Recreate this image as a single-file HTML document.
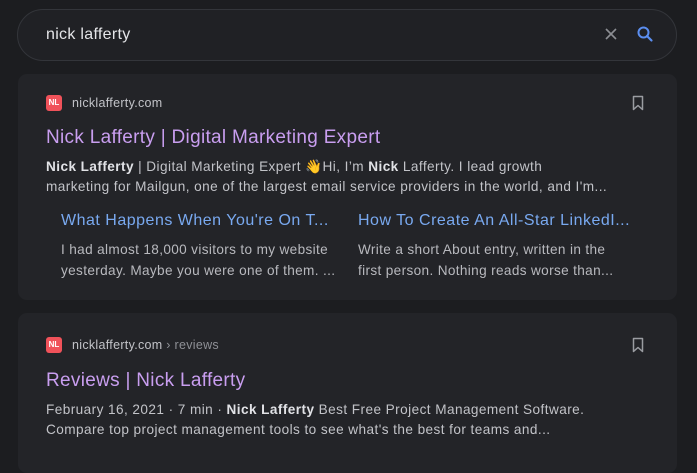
<!DOCTYPE html>
<html><head><meta charset="utf-8"><style>
*{margin:0;padding:0;box-sizing:border-box}
body{width:697px;height:452px;overflow:hidden;background:#1c1d20;font-family:"Liberation Sans",sans-serif;color:#c9cacf;position:relative}
.abs{position:absolute;white-space:nowrap}
.search{position:absolute;left:17px;top:9px;width:660px;height:52px;border:1px solid #33353a;border-radius:26px;background:#202125}
.card{position:absolute;left:18px;width:659px;background:#232428;border-radius:9px}
.fav{position:absolute;width:16px;height:16px;background:#f0525a;border-radius:3px;color:#fff;font-size:8px;line-height:16px;text-align:center;font-weight:bold}
.url{font-size:12.5px;color:#c2c3c8;letter-spacing:.3px}
.url span{color:#8e9096}
.title{font-size:19px;color:#c99ef0;letter-spacing:.3px}
.snip{font-size:13.6px;color:#c2c3c8;line-height:20px;letter-spacing:.43px}
.snip b{color:#e1e2e6}
.sub{font-size:16px;color:#79a9f0;letter-spacing:.5px}
.ss{font-size:13.6px;color:#b8b9be;line-height:21px;letter-spacing:.35px}
</style></head><body>
<div class="search"></div>
<div class="abs" style="left:46px;top:26px;font-size:16px;color:#e4e5e8;letter-spacing:.3px">nick lafferty</div>
<svg class="abs" style="left:604px;top:27px" width="14" height="14" viewBox="0 0 14 14"><path d="M2 2L12 12M12 2L2 12" stroke="#8c8e93" stroke-width="1.6"/></svg>
<svg class="abs" style="left:636px;top:25px" width="18" height="18" viewBox="0 0 18 18"><circle cx="7.5" cy="7.5" r="5" fill="none" stroke="#5b8ef0" stroke-width="2"/><path d="M11 11L15.5 15.5" stroke="#5b8ef0" stroke-width="2.2" stroke-linecap="round"/></svg>

<div class="card" style="top:74px;height:226px"></div>
<div class="fav" style="left:46px;top:95px">NL</div>
<div class="abs url" style="left:72px;top:96px">nicklafferty.com</div>
<svg class="abs" style="left:632px;top:95px" width="12" height="16" viewBox="0 0 12 16"><path d="M1.5 1.5H10.5V14.5L6 10.5L1.5 14.5Z" fill="none" stroke="#9a9ca1" stroke-width="1.5" stroke-linejoin="round"/></svg>
<div class="abs title" style="left:46px;top:127px">Nick Lafferty | Digital Marketing Expert</div>
<div class="abs snip" style="left:46px;top:157px"><b>Nick Lafferty</b> | Digital Marketing Expert <span style="color:#f0c030">👋</span>Hi, I’m <b>Nick</b> Lafferty. I lead growth<br>marketing for Mailgun, one of the largest email service providers in the world, and I'm...</div>
<div class="abs sub" style="left:61px;top:212px">What Happens When You're On T...</div>
<div class="abs sub" style="left:358px;top:212px">How To Create An All-Star LinkedI...</div>
<div class="abs ss" style="left:61px;top:239px">I had almost 18,000 visitors to my website<br>yesterday. Maybe you were one of them. ...</div>
<div class="abs ss" style="left:358px;top:239px">Write a short About entry, written in the<br>first person. Nothing reads worse than...</div>

<div class="card" style="top:313px;height:160px"></div>
<div class="fav" style="left:46px;top:337px">NL</div>
<div class="abs url" style="left:72px;top:338px">nicklafferty.com <span>› reviews</span></div>
<svg class="abs" style="left:632px;top:337px" width="12" height="16" viewBox="0 0 12 16"><path d="M1.5 1.5H10.5V14.5L6 10.5L1.5 14.5Z" fill="none" stroke="#9a9ca1" stroke-width="1.5" stroke-linejoin="round"/></svg>
<div class="abs title" style="left:46px;top:370px">Reviews | Nick Lafferty</div>
<div class="abs snip" style="left:46px;top:400px">February 16, 2021 · 7 min · <b>Nick Lafferty</b> Best Free Project Management Software.<br>Compare top project management tools to see what's the best for teams and...</div>
</body></html>
